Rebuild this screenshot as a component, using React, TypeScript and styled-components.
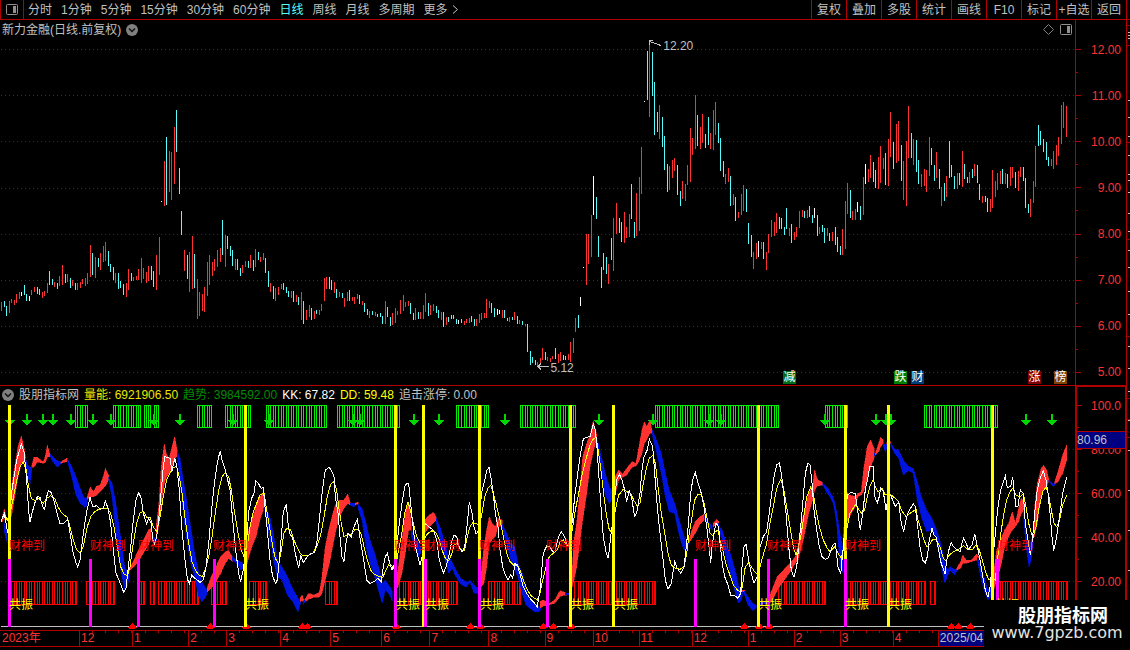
import React from "react";
import styled, { createGlobalStyle } from "styled-components";

const LINE = "#b00000";
const RED = "#ff3232";
const CYAN = "#54fcfc";
const BLUE = "#0014e0";
const SILVER = "#c0c0c0";
const NAVY = "#000080";

const GlobalStyle = createGlobalStyle`
  * { box-sizing: border-box; }
  body {
    margin: 0;
    background: #000;
    color: ${SILVER};
    font: 12px/16px "Liberation Sans", "Noto Sans CJK SC", sans-serif;
  }
`;

/* ---------- data: samples are stored in thirds of a plot unit ---------- */

type Pt = number[];
const rows = (src: string): Pt[] =>
  src.trim().split(/[\s]*,[\s]*|\n/).filter(Boolean).map((r) => r.trim().split(/\s+/).map(Number));
const place = (ox: number, oy: number, src: string): Pt[] =>
  rows(src).map((r) => [ox + r[0] / 3, ...r.slice(1).map((v) => oy + v / 3)]);

type Candle = { x: number; top: number; bottom: number; color: string };
const candles = (ox: number, oy: number, src: string): Candle[] =>
  src.trim().split(/\s*,\s*/).map((r) => {
    const [x, a, b, k] = r.split(" ");
    return {
      x: ox + Math.floor(Number(x) / 3),
      top: oy + Math.round(Number(a) / 3),
      bottom: oy + Math.round(Number(b) / 3),
      color: k === "r" ? RED : k === "c" ? CYAN : "#ffffff",
    };
  });

const CANDLES: Candle[] = [
  ...candles(0, 100, `4 606 633 r,13 603 620 c,19 618 648 c,28 603 639 r,34 597 609 r,43 600 615 r,49 582 609 r,58 576 597 r,64 576 588 w,73 555 585 c,79 582 603 c,88 588 603 w,94 570 585 r,103 561 576 r,112 561 582 c,118 567 585 c,127 576 594 r,133 573 588 r,142 549 579 r,148 513 555 c,157 537 555 c,163 546 561 r,172 549 567 c,178 528 558 r,187 495 555 r,196 522 549 c,202 522 546 r,211 534 564 c,217 540 558 r,226 549 570 c,232 549 570 r,241 546 564 r,247 537 552 r,256 534 558 r,262 519 552 r,271 435 531 r,277 459 525 c,286 471 534 r,295 474 501 c,301 459 510 r,310 438 486 r,316 426 483 r,325 453 498 c,331 492 516 c,340 501 540 c,346 519 549 r,355 519 567 c,361 543 564 c,370 552 585 c,379 549 591 r,385 507 570 r,394 519 543 c,400 531 543 r,409 528 540 r,415 507 540 r,424 474 549 r,430 504 537 r,439 516 549 r,445 498 543 r,454 498 540 c,460 513 561 c,469 465 570 r,478 411 525 r,484 303 306 w,493 183 318 r,499 111 315 c,508 153 276 r,514 156 300 r,523 81 252 r,529 30 156 c,538 204 282 c,544 333 405 c,553 450 513 r,562 465 537 c,568 456 576 r,577 408 567 r,583 462 564 c,592 537 657 r,598 576 648 r,607 582 633 r,613 561 636 r,622 486 588 r,628 465 555 r,637 486 528 r,643 477 513 r,652 450 501 r,661 444 486 r,667 360 465 c,676 405 501 r,682 408 447 c,691 438 468 c,697 450 498 c,706 477 510 r,712 477 510 c,721 504 528 c,727 495 519 r,736 483 501 r,745 483 504 c,751 465 504 r,760 480 513 c,766 447 501 r,775 456 480 c,781 471 486 r,790 459 480 r,796 474 519 c,805 513 561 c,811 549 576 r,820 558 597 c,826 564 603 r,835 561 585 r,844 552 567 r,850 549 570 c,859 561 579 c,865 573 591 c,874 573 594 r,880 573 606 c,889 585 606 r,895 591 615 c,904 576 660 r,910 603 672 c,919 630 660 r,928 615 651 r,934 624 660 c,943 633 657 r,949 630 642 c,958 630 645 r,964 612 633 r,973 534 603 r,979 531 567 r,988 531 567 c`),
  ...candles(320, 260, `34 60 90 c,43 66 99 r,49 87 114 c,58 96 111 r,67 99 114 c,73 114 141 r,82 96 123 r,88 90 123 c,97 111 123 r,103 111 132 r,112 102 117 r,118 105 132 c,127 123 135 r,133 129 156 c,142 147 165 c,148 153 174 r,157 153 165 c,166 156 168 r,172 162 171 c,181 159 171 c,187 168 192 c,196 123 192 r,202 141 171 c,211 171 198 c,217 159 195 r,226 144 189 r,232 153 165 r,241 120 162 r,250 105 153 r,256 126 141 r,265 123 138 r,271 129 162 c,280 159 180 c,286 144 180 r,295 156 177 c,301 156 177 r,310 135 177 r,316 99 156 r,325 129 168 c,331 135 165 r,340 132 153 r,349 138 159 c,355 150 174 c,364 156 180 r,370 156 201 c,379 171 195 r,385 171 186 c,394 165 177 c,400 165 177 c,409 177 192 c,415 180 192 w,424 177 189 c,433 183 195 r,439 177 189 r,448 174 189 r,454 168 186 c,463 177 198 c,469 177 198 r,478 162 189 r,484 159 180 r,493 159 174 r,499 117 174 r,508 123 144 r,514 129 159 c,523 144 171 c,532 147 165 w,538 150 162 w,547 150 174 r,553 150 174 c,562 174 183 c,568 171 186 r,577 171 180 c,583 156 180 r,592 168 192 c,598 180 192 r,607 183 195 c,616 192 198 r,622 192 276 c,631 273 315 c,637 291 309 c,646 300 315 c,652 306 318 r,661 294 312 r,667 264 300 r,676 276 300 c,682 291 303 r,691 294 306 r,697 288 297 r,706 264 297 c,715 282 309 r,721 276 303 r,730 285 300 c,736 288 300 c,745 282 300 r,751 246 306 r,760 234 279 r,766 174 216 r,775 165 204 c,781 111 138 w`),
  ...candles(560, 30, `70 711 714 w,79 612 765 r,85 612 702 r,94 555 681 r,100 438 555 w,109 501 567 c,115 618 681 c,124 711 774 c,130 669 720 c,139 681 732 c,145 702 762 r,154 624 690 c,160 564 723 r,169 519 612 r,178 564 609 c,184 576 636 c,193 546 639 r,199 591 624 r,208 552 621 r,214 462 567 c,223 576 624 c,229 489 618 r,238 441 603 r,244 351 492 r,253 213 216 w,262 63 210 c,268 36 261 r,277 66 198 c,283 156 315 c,292 246 306 c,298 225 327 r,307 261 351 c,313 318 420 c,322 402 486 c,328 408 480 r,337 390 444 r,343 384 423 r,352 405 495 c,361 483 528 c,367 453 507 r,376 462 513 r,382 405 465 r,391 294 456 r,397 324 375 r,406 195 357 r,412 255 348 c,421 291 357 r,427 252 339 r,436 312 354 c,445 261 345 c,451 309 357 r,460 240 360 r,466 216 315 r,475 279 339 c,481 324 423 c,490 393 441 c,496 432 462 r,505 414 456 r,511 438 528 c,520 492 525 r,526 501 573 c,535 546 564 r,544 492 555 r,550 465 543 r,559 477 546 c,565 579 642 c,574 615 681 c,580 666 717 r,589 639 687 r,595 633 681 w,604 636 657 r,610 636 687 c,619 666 720 r,625 612 669 r,634 570 621 r,643 576 618 r,649 549 609 r,658 561 597 c,664 564 597 c,673 591 615 c,679 534 597 c,688 594 618 r,694 582 639 c,703 606 630 r,709 591 621 r,718 543 594 r,727 540 561 r,733 543 564 c,742 540 564 r,748 528 561 c,757 555 579 c,763 534 564 w,772 555 618 c,778 591 612 r,787 585 606 c,793 594 639 c,802 594 618 r,808 609 633 c,817 606 633 r,826 591 645 c,832 621 666 c,841 648 675 c,847 597 675 r,856 513 657 r,862 459 552 r`),
  ...candles(830, 80, `61 330 414 c,67 393 420 r,76 387 420 r,82 366 396 w,91 378 420 c,100 291 405 r,106 252 312 w,115 267 306 r,121 225 294 r,130 246 306 c,136 270 324 c,145 231 327 r,151 198 309 r,160 234 267 r,166 219 315 c,175 177 318 r,181 96 231 r,190 186 267 c,199 132 249 r,205 123 243 r,214 195 303 c,220 243 360 r,229 183 378 r,235 78 234 r,244 159 234 c,250 177 255 r,259 180 276 c,265 240 312 c,274 282 321 r,283 267 318 r,289 270 336 r,298 171 288 r,304 204 255 c,313 255 303 c,319 216 294 r,328 267 327 c,334 321 378 r,343 309 363 c,349 288 351 r,358 183 294 c,364 255 291 c,373 288 327 c,382 279 327 r,388 279 315 c,397 213 321 r,403 252 297 c,412 291 309 c,418 276 309 r,427 267 294 c,433 252 288 r,442 255 309 c,448 312 360 c,457 348 369 r,466 348 366 c,472 354 396 c,481 357 396 r,487 270 384 r,496 303 351 r,502 279 330 r,511 273 312 r,517 267 312 c,526 279 312 r,532 282 324 c,541 261 318 r,547 261 294 r,556 276 324 c,565 273 333 r,571 261 291 r,580 261 303 c,586 294 384 c,595 372 399 c,601 357 411 r,610 303 369 r,616 198 321 r,625 135 198 c,631 153 195 c,640 177 216 c,649 186 240 c,655 231 258 c,664 237 258 r,670 213 267 r,679 195 255 r,685 171 228 r,694 75 192 r,700 66 144 r,709 78 171 r`),
];

const KK: Pt[] = [
  ...place(0, 380, `3 425,13 400,18 430,23 460,28 440,30 390,36 330,50 240,64 193,72 215,80 300,86 395,90 425,96 400,104 370,112 350,120 352,128 380,134 388,140 350,145 332,152 335,160 355,170 395,180 432,192 430,203 418,210 460,220 520,228 548,233 560,240 540,250 460,260 395,270 352,278 380,290 377,300 388,310 385,316 362,324 385,332 430,340 510,348 580,357 600,371 637,378 625,384 570,392 500,400 420,408 360,416 338,424 355,430 400,440 432,446 415,454 430,458 480,464 492,470 470,478 400,484 330,490 260,494 230,510 235,516 272,524 235,530 255,538 330,545 440,555 540,562 595,568 613,575 585,585 595,600 607,610 600,618 560,626 490,634 400,642 320,650 260,656 230,661 212,666 240,676 270,690 330,698 420,708 520,718 590,722 603,730 570,740 480,746 395,755 355,762 340,767 302,775 310,783 325,790 322,794 370,802 450`),
  ...place(270, 380, `0 540,8 590,17 610,22 600,28 540,34 470,40 395,49 373,54 430,60 462,68 475,76 520,86 565,92 525,100 548,112 530,124 520,134 518,140 490,146 440,153 370,160 310,166 270,178 262,186 275,192 290,196 350,204 400,210 470,216 530,222 545,228 490,234 460,244 470,252 440,262 418,268 460,276 510,284 560,290 600,300 610,312 605,324 595,334 605,340 560,346 530,352 520,358 545,366 570,374 550,380 500,388 430,396 370,404 320,410 310,416 310,420 350,428 430,436 500,444 530,450 555,456 530,462 460,466 430,476 440,490 450,500 480,508 540,514 560,520 580,528 560,536 530,544 490,552 465,560 470,566 500,576 515,584 500,592 430,598 365,606 400,612 440,618 462,624 455,630 420,634 340,642 310,650 272,657 262,664 300,670 340,676 400,684 440,690 510,698 560,706 585,714 600,722 585,728 595,735 550,744 562,752 590,760 620,770 640,780 655,790 665,802 680`),
  ...place(540, 380, `0 630,6 560,10 520,20 498,30 500,38 515,46 510,56 470,64 455,74 470,82 495,90 500,96 430,104 350,112 290,120 230,130 177,140 172,150 170,160 132,166 150,170 190,176 280,182 370,190 470,198 515,205 535,211 480,216 440,222 370,230 300,238 282,246 300,254 330,260 365,268 330,276 360,284 412,292 390,300 340,306 270,312 230,322 210,328 177,338 200,344 280,352 380,360 460,368 530,376 600,384 628,394 610,404 545,412 565,422 580,432 560,440 490,446 420,452 340,458 300,466 278,474 310,484 340,492 380,500 440,508 510,512 548,516 500,522 460,528 430,536 440,540 490,548 560,554 590,564 615,572 645,582 645,594 655,602 640,606 560,612 500,618 493,626 540,634 580,642 610,652 590,660 500,670 470,680 455,688 400,694 350,702 290,710 255,718 248,724 280,730 330,738 400,746 500,754 570,762 592,770 560,776 500,784 420,790 350,796 280,804 248,810 255,816 310,822 390,830 450,838 500,846 530,856 538,864 535`),
  ...place(830, 380, `0 520,8 495,16 490,24 560,32 582,38 520,46 430,52 345,62 338,76 340,84 400,91 450,98 400,106 330,114 290,120 258,130 260,134 350,142 368,148 350,152 325,160 335,168 390,176 340,184 350,196 380,206 365,214 430,221 455,230 410,238 390,250 372,256 380,262 430,270 500,278 540,286 548,292 530,298 480,306 445,312 465,318 470,324 500,332 545,345 582,352 530,358 505,364 488,370 500,380 508,390 515,396 490,401 475,408 490,416 508,426 495,434 462,440 490,450 540,458 590,466 630,474 652,480 620,486 560,492 500,498 440,504 380,512 330,520 305,526 288,532 322,542 320,548 290,552 330,558 380,564 378,571 330,580 340,586 430,594 480,601 525,608 470,616 380,622 330,632 290,640 272,648 300,654 340,660 400,666 470,671 512,680 470,690 400,698 340,710 292`),
];

const DD: Pt[] = [
  ...place(0, 380, `3 425,13 402,22 420,30 400,40 355,50 300,60 260,70 246,78 268,84 310,94 355,104 362,116 355,130 370,140 355,152 347,164 355,174 380,184 398,202 412,210 440,220 480,230 510,240 518,250 500,262 440,272 410,284 395,296 388,310 385,322 385,332 400,342 440,352 500,362 560,372 582,382 588,390 560,400 490,410 430,420 398,430 394,440 412,450 412,460 440,470 455,480 410,490 350,500 300,510 280,520 262,530 260,538 290,546 340,556 420,566 490,576 545,586 570,596 585,606 590,616 570,626 530,636 470,646 400,656 330,666 290,676 278,686 290,694 330,704 400,714 460,724 510,734 535,742 500,750 440,760 395,770 370,780 345,792 340,802 400`),
  ...place(270, 380, `0 450,8 500,16 535,26 553,34 510,42 460,50 445,62 450,70 475,80 500,90 520,100 528,116 525,130 518,142 495,152 465,162 410,172 350,182 312,192 305,200 330,206 380,214 430,222 470,232 465,244 462,256 448,266 448,274 465,282 500,292 540,302 570,312 583,324 588,338 592,346 575,356 555,366 558,376 570,384 520,394 470,404 400,414 365,422 395,430 430,440 470,450 490,458 490,466 470,474 460,486 452,498 458,508 480,516 510,526 535,536 543,546 520,552 495,562 490,574 510,584 510,592 470,600 440,608 428,618 430,628 435,636 400,644 350,654 325,662 316,670 340,678 370,690 420,700 470,710 520,720 545,732 557,742 555,752 575,762 605,772 630,784 648,802 660`),
  ...place(540, 380, `0 640,8 600,18 560,28 530,40 520,52 510,60 485,70 480,80 495,90 490,98 440,106 390,116 340,126 285,140 230,150 195,160 177,168 172,176 220,184 280,192 350,200 410,208 450,214 455,220 420,228 380,236 345,250 328,260 335,272 340,282 362,292 378,300 368,308 320,318 270,328 235,338 226,346 250,354 320,364 400,374 460,384 520,394 555,406 565,420 568,432 560,440 520,448 460,456 410,464 360,474 342,484 342,492 370,500 410,510 460,518 468,526 455,534 450,540 480,548 510,556 545,566 575,580 615,594 632,604 635,610 600,616 560,626 548,634 560,644 575,652 583,660 560,668 530,680 490,690 430,700 380,710 325,722 298,730 320,740 380,750 440,760 500,768 525,776 500,784 460,790 420,800 350,812 322,820 340,828 390,838 440,850 480,862 505`),
  ...place(830, 380, `0 515,14 500,24 520,34 535,42 500,50 450,60 400,76 375,84 385,94 400,104 390,112 350,120 318,130 298,136 320,144 335,156 325,166 345,176 340,190 350,204 362,214 390,228 410,240 400,258 388,264 420,272 445,280 475,290 500,298 495,308 478,320 480,330 500,340 535,348 543,358 525,370 515,384 510,400 497,414 508,426 510,438 495,448 510,458 545,468 580,476 598,486 595,496 600,502 540,508 500,514 450,522 400,530 360,540 335,548 325,558 345,570 350,580 342,588 380,596 430,604 460,610 470,618 440,628 380,638 335,648 322,656 345,664 390,672 430,680 440,688 425,698 375,710 345`),
];

/* Trend ribbon: each run is x, upper edge, lower edge */
type Band = { color: string; pts: Pt[] };
const bands = (ox: number, src: string): Band[] =>
  src.trim().split(/\s*;\s*/).map((run) => ({
    color: run[0] === "r" ? RED : BLUE,
    pts: place(ox, 380, run.slice(2)),
  }));

const BANDS: Band[] = [
  ...bands(0, `r 6 412 425,13 388 412,17 405 430;b 12 430 450,22 450 490;r 30 370 420,36 310 400,44 260 350,54 200 290,64 168 250,72 205 240,78 240 255;b 76 235 250,84 255 290,90 262 312,95 262 275;r 95 258 262,102 232 262,112 232 246,122 240 248,130 245 250,136 230 248,142 195 230,150 225 230;b 150 222 230,160 232 246,172 242 262,184 246 250;r 182 246 250,202 234 244;b 203 238 246,215 260 290,228 290 345,240 325 370,254 355 382,262 352 375;r 262 350 358,271 320 350,280 335 350,290 318 345,300 316 335,310 290 325,316 265 318,326 285 300;b 326 292 300,336 310 350,346 360 440,356 430 530,366 500 590,374 560 630,382 575 620,388 570 590;r 388 565 572,400 545 562,415 510 545,430 480 520,445 450 495,454 445 475;b 454 455 480,464 475 492,470 470 478;r 468 440 475,476 380 440,484 260 370,493 192 310,500 225 290,508 235 280,516 200 260,524 170 240,532 215 225;b 532 215 225,540 235 300,550 300 400,560 360 480,572 440 550,584 520 590,596 575 650,606 605 665,614 620 655,622 630 640;r 622 622 635,634 590 625,648 560 605,662 530 580,676 515 550,686 512 535,697 530 545;b 697 530 540,710 540 550,722 545 570,730 550 565;r 735 535 580,746 450 530,756 420 500,768 380 470,780 350 420,790 340 390,794 345 360;b 794 370 390,804 400 450,812 420 500`),
  ...bands(270, `b 0 415 460,10 460 540,22 540 590,36 560 600,52 590 645,68 625 665,84 655 695,92 660 670;r 90 655 665,96 645 662,102 662 668,116 640 658,130 645 652,148 638 652,156 590 640,166 500 600,176 450 560,186 410 510,196 375 460,208 360 410,222 360 385,233 342 370,240 365 375;b 100 662 674,106 660 664;b 240 370 376,252 370 380,258 368 374;r 255 370 374,264 366 372;b 264 372 385,276 385 420,288 430 500,300 480 550,314 520 590,328 570 640,337 610 670,346 600 630,356 615 640,366 632 662;r 372 620 640,384 570 620,396 480 580,406 400 520,416 365 450,424 430 450;b 424 450 470,436 470 500,446 490 530,452 500 520;r 464 420 460,478 405 440,490 397 430,498 410 420;b 498 415 425,510 440 480,522 480 530,536 530 580,546 545 565,558 570 590,572 595 612,588 605 622,596 605 612,600 600 606,612 615 640,624 625 640;r 634 580 620,642 500 610,650 450 560,658 410 490,666 430 480,676 440 470,684 415 440,696 420 438;b 696 432 442,710 460 490,722 490 540,734 500 570,744 550 590,756 580 640,768 630 675,780 655 685,794 670 695,806 680 695,812 680 690;r 810 665 685,820 660 678,836 668 675`),
  ...bands(540, `r 26 672 675,44 660 670,60 632 650,72 636 645,80 640 645;b 76 640 644,88 640 644;r 96 580 620,102 480 600,110 430 560,118 350 500,128 230 420,140 190 340,150 165 260,160 122 215,170 165 175;b 170 170 190,182 220 270,196 280 345,208 320 372,215 330 360;r 226 290 340,236 270 300,248 282 292,260 265 285,276 245 262,288 250 258,296 205 245,306 150 220,313 125 190,320 140 180,330 122 160,336 150 160;b 336 150 160,350 180 220,364 220 280,376 280 350,388 330 395,404 370 400,416 415 460,430 460 505,438 490 515,446 480 490;r 446 480 490,456 450 475,466 425 460,478 412 435,492 402 420;b 494 408 415,506 428 440,516 435 450;r 520 430 440,530 418 432,536 425 430;b 534 430 440,546 450 480,560 490 540,574 530 590,588 580 650,596 620 670,604 640 660,608 630 640;r 606 630 634,614 630 636;b 612 632 640,624 650 675,638 670 692,648 675 685;b 660 668 674,684 664 670;r 686 655 675,700 620 655,712 590 630,726 575 610,740 560 590,754 545 570,766 530 550,774 500 540,782 440 510,792 400 470,806 340 400,818 315 360,824 270 330,832 298 318,848 308 315;b 848 310 315,862 322 340,870 335 350`),
  ...bands(830, `b 0 340 350,10 350 370,20 395 430,30 460 560,40 510 580;r 40 470 500,50 335 430,58 345 410,76 350 380,84 340 350,94 335 345,102 260 330,112 200 300,122 180 260,132 205 235;b 132 220 228,138 222 226;r 136 220 225,146 190 215,152 172 200,160 180 190;b 160 190 200,166 195 215,174 190 200;r 170 185 192,182 186 190;b 182 188 196,194 208 220,206 210 235,220 240 285,236 260 272,250 265 280,262 305 360,274 350 410,290 390 455,306 415 450,320 450 480,332 490 550,344 550 610,352 570 590,360 560 570,374 568 585,382 566 570;r 380 565 570,392 545 565,398 525 550,408 540 550,424 540 545,440 522 540,446 530 532;b 442 530 540,452 560 590,462 590 630,474 630 660,482 620 650;r 488 600 640,500 510 600,512 480 560,524 450 500,536 430 470,547 395 450,556 430 440,566 385 425,574 355 400,584 370 390;b 580 390 400,588 440 500,597 500 560,604 480 540,610 470 480;r 612 400 470,622 310 430,632 270 350,640 255 330,650 270 320,656 298 302;b 656 300 304,670 312 320,676 306 312;r 674 306 312,684 275 305,698 225 280,710 195 240`),
];

const GREEN_BLOCKS = rows("75 88,113 141,144 151,154 159,197 212,225 251,266 327,337 400,456 489,520 576,655 779,825 848,924 932,934 998");
const RED_BLOCKS = rows("11 77,86 115,138 145,150 155,158 199,211 227,249 267,325 338,399 424,425 458,488 521,574 656,778 826,847 926,930 936,998 1068");
const YELLOW_BARS = [8, 244, 394, 422, 478, 569, 612, 757, 844, 887, 991];
const MAGENTA_BARS = [8, 89, 137, 213, 394, 424, 478, 546, 694, 767, 844, 996];
const ARROWS = [10, 27, 43, 53, 71, 93, 111, 154, 180, 233, 269, 353, 360, 414, 439, 505, 599, 653, 709, 721, 825, 876, 886, 891, 1026, 1052];
const TRIANGLES = [132, 210, 246, 302, 307, 396, 470, 480, 543, 553, 571, 744, 759, 769, 951, 958, 970];
const WEALTH_X = [9, 90, 138, 213, 394, 424, 479, 546, 695, 767, 845, 997];
const RESONANCE_X = [9, 245, 396, 425, 480, 570, 614, 758, 845, 888, 995];
const BADGES: [number, string, string][] = [
  [783, "减", "#006c1c"],
  [894, "跌", "#008000"],
  [911, "财", "#003c78"],
  [1028, "涨", "#800000"],
  [1054, "榜", "#804000"],
];
const MONTHS: [string, number][] = [
  ["2023年", 79], ["12", 53], ["1", 56], ["2", 38], ["3", 54], ["4", 50], ["5", 51], ["6", 48], ["7", 59],
  ["8", 56], ["9", 48], ["10", 46], ["11", 53], ["12", 56], ["1", 46], ["2", 46], ["3", 53], ["4", 45], ["2025/04.", 138],
];

/* ---------- page frame ---------- */

const Screen = styled.div`
  display: flex;
  flex-direction: column;
  min-height: 100vh;
  position: relative;
  overflow: hidden;
`;

const Toolbar = styled.header`
  display: flex;
  height: 20px;
  padding-right: 3px;
  border-bottom: 1px solid ${LINE};
`;

const PlainButton = styled.button`
  margin: 0;
  padding: 0;
  border: 0;
  background: none;
  color: inherit;
  font: inherit;
  white-space: nowrap;
`;

const PaneButton = styled(PlainButton)`
  display: flex;
  align-items: center;
  justify-content: center;
  width: 24px;
  border: solid ${LINE};
  border-width: 0 1px;
`;

const Periods = styled.nav`
  display: flex;
  align-items: center;
  gap: 9px;
  padding-left: 4px;
  flex: 1;
`;

const Period = styled(PlainButton)<{ $active?: boolean }>`
  display: flex;
  align-items: center;
  gap: 4px;
  color: ${(p) => (p.$active ? CYAN : SILVER)};
`;

const Tools = styled.div`
  display: flex;
  border-right: 1px solid ${LINE};
`;

const Tool = styled(PlainButton)`
  display: flex;
  align-items: center;
  justify-content: center;
  width: 35px;
  border-left: 1px solid ${LINE};
`;

const Workspace = styled.main`
  flex: 1;
  display: grid;
  grid-template-columns: minmax(0, 1fr) 52px 3px;
  grid-template-rows: minmax(0, 366fr) minmax(0, 244fr) 17px 3px;
`;

const Panel = styled.section<{ $ruled?: boolean }>`
  display: flex;
  flex-direction: column;
  min-width: 0;
  border-bottom: ${(p) => (p.$ruled ? `1px solid ${LINE}` : "0")};
`;

const PanelHead = styled.div<{ $tall?: boolean }>`
  display: flex;
  align-items: center;
  gap: 5px;
  height: ${(p) => (p.$tall ? 19 : 17)}px;
  padding: 0 3px 0 2px;
  white-space: nowrap;
`;

const IconButton = styled(PlainButton)`
  display: flex;
`;

const HeadTools = styled.div`
  display: flex;
  align-items: center;
  gap: 6px;
  margin-left: auto;
`;

const Reading = styled.span<{ $color?: string }>`
  color: ${(p) => p.$color ?? SILVER};
`;

const Plot = styled.div`
  position: relative;
  flex: 1;
  min-height: 0;
`;

const Drawing = styled.svg`
  position: absolute;
  inset: 0;
  width: 100%;
  height: 100%;
`;

const Mark = styled.span<{ $x: number; $y: number; $color: string }>`
  position: absolute;
  left: ${(p) => p.$x}%;
  top: ${(p) => p.$y}%;
  color: ${(p) => p.$color};
  line-height: 14px;
  white-space: nowrap;
`;

const Badge = styled(Mark)<{ $bg: string }>`
  width: 13px;
  background: ${(p) => p.$bg};
  line-height: 13px;
  text-align: center;
`;

const Scale = styled.div<{ $framed?: boolean }>`
  position: relative;
  display: flex;
  flex-direction: column;
  justify-content: space-between;
  padding: ${(p) => (p.$framed ? "18px 4px 26px 0" : "29px 5px 12px 0")};
  border: solid ${LINE};
  border-width: ${(p) => (p.$framed ? "1px 2px 0" : "0 1px 1px")};
`;

const Tick = styled.div<{ $minor?: boolean }>`
  display: flex;
  align-items: center;
  justify-content: space-between;
  height: 1px;
  color: ${RED};
  &::before {
    content: "";
    width: ${(p) => (p.$minor ? 2 : 5)}px;
    height: 1px;
    background: ${LINE};
  }
`;

const CurrentValue = styled.div`
  position: absolute;
  top: 44px;
  left: 0;
  right: 0;
  height: 18px;
  background: ${NAVY};
  border: solid ${LINE};
  border-width: 1px 0;
  line-height: 16px;
`;

const Edge = styled.div`
  grid-column: 3;
  grid-row: 1 / 5;
  contain: size;
  overflow: hidden;
`;

const Months = styled.div`
  grid-column: 1 / 3;
  display: grid;
  grid-template-columns: ${MONTHS.map((m) => `minmax(0, ${m[1]}fr)`).join(" ")} 51px;
  border: solid ${LINE};
  border-width: 1px 0;
  color: ${RED};
`;

const Month = styled.div<{ $first?: boolean; $current?: boolean }>`
  padding-left: ${(p) => (p.$first ? 2 : 1)}px;
  border-left: ${(p) => (p.$first ? "0" : `1px solid ${LINE}`)};
  background: ${(p) =>
    p.$current
      ? NAVY
      : p.$first
        ? "none"
        : `repeating-linear-gradient(90deg, transparent 0 12px, ${LINE} 12px 13px) 0 0 / 100% 2px no-repeat`};
  color: ${(p) => (p.$current ? SILVER : RED)};
  line-height: 15px;
  white-space: nowrap;
`;

const NextRow = styled.div`
  grid-column: 1 / 3;
  overflow: hidden;
`;

const Watermark = styled.aside`
  position: absolute;
  right: 0;
  bottom: 0;
  width: 146px;
  height: 50px;
  padding-top: 3px;
  background: #000;
  color: #fff;
  text-align: center;
`;

const SiteName = styled.div`
  padding-left: 12px;
  font: bold 18px/22px "Noto Sans CJK SC", sans-serif;
`;

const SiteAddress = styled.div`
  color: #e4e4e4;
  font: 16px/16px "DejaVu Sans", sans-serif;
`;

/* ---------- icons ---------- */

const PaneIcon = () => (
  <svg width="12" height="11" viewBox="0 0 12 11" aria-hidden>
    <rect x="0.5" y="0.5" width="11" height="10" rx="1" fill="none" stroke="#909090" />
    <rect x="7" y="2" width="3" height="7" fill="#909090" />
  </svg>
);

const DropIcon = () => (
  <svg width="12" height="12" viewBox="0 0 12 12" aria-hidden>
    <circle cx="6" cy="6" r="6" fill="#808080" />
    <path d="M3 4.5 L6 7.5 L9 4.5" fill="none" stroke="#101010" strokeWidth="1.5" />
  </svg>
);

const DiamondIcon = () => (
  <svg width="11" height="11" viewBox="0 0 11 11" aria-hidden>
    <path d="M5.5 0.5 L10.5 5.5 L5.5 10.5 L0.5 5.5 Z" fill="none" stroke="#808080" />
  </svg>
);

/* ---------- charts ---------- */

const W = 1075;
const polyline = (pts: Pt[]) => pts.map((p) => `${p[0].toFixed(1)},${p[1].toFixed(1)}`).join(" ");
const ribbon = (pts: Pt[]) => {
  const upper = pts.map((p) => `${p[0].toFixed(1)},${p[1].toFixed(1)}`);
  const lower = [...pts].reverse().map((p) => `${p[0].toFixed(1)},${p[2].toFixed(1)}`);
  return [...upper, ...lower].join(" ");
};

const DottedRules = ({ at }: { at: number[] }) => (
  <g stroke="#a00000" strokeDasharray="1 3">
    {at.map((y) => (
      <line key={y} x1="1" x2={W} y1={y + 0.5} y2={y + 0.5} />
    ))}
  </g>
);

const PriceDrawing = () => (
  <Drawing viewBox="0 39 1075 346" preserveAspectRatio="none" shapeRendering="crispEdges" role="img" aria-label="新力金融日线">
    <DottedRules at={[49, 95, 141, 188, 234, 280, 326, 372]} />
    {CANDLES.map((c, i) => (
      <rect key={i} x={c.x} y={c.top} width="1" height={c.bottom - c.top} fill={c.color} />
    ))}
    <g stroke={SILVER} fill="none">
      <path d="M649.5 41.5 L661 45.5 M649.5 45 V40.5 H653" />
      <path d="M537.5 366.5 H549 M541 363.5 L538 366.5 L541 369.5" />
    </g>
  </Drawing>
);

const Block = ({ from, to, y, height, color }: { from: number; to: number; y: number; height: number; color: string }) => (
  <g fill="none" stroke={color}>
    <rect x={from + 0.5} y={y + 0.5} width={to - from - 1} height={height - 1} />
    {CANDLES.filter((c) => c.x > from + 1 && c.x < to - 1).map((c) => (
      <line key={c.x} x1={c.x + 0.5} x2={c.x + 0.5} y1={y} y2={y + height} />
    ))}
  </g>
);

const IndicatorDrawing = () => (
  <Drawing viewBox="0 403 1075 227" preserveAspectRatio="none" shapeRendering="crispEdges" role="img" aria-label="量能趋势">
    <DottedRules at={[449, 493, 537, 581]} />
    {GREEN_BLOCKS.map(([a, b]) => (
      <Block key={a} from={a} to={b} y={405} height={23} color="#00f000" />
    ))}
    {RED_BLOCKS.map(([a, b]) => (
      <Block key={a} from={a} to={b} y={581} height={24} color="#ff0000" />
    ))}
    {ARROWS.map((x) => (
      <path key={x} d={`M${x - 1} 414 h2 v6 h4 l-5 6 l-5 -6 h4 z`} fill="#00d800" />
    ))}
    {BANDS.map((b, i) => (
      <polygon key={i} points={ribbon(b.pts)} fill={b.color} stroke={b.color} strokeWidth="0.5" />
    ))}
    <polyline points={polyline(DD)} fill="none" stroke="#ffff00" />
    <polyline points={polyline(KK)} fill="none" stroke="#ffffff" />
    <rect x="1" y="626" width="1074" height="1" fill={SILVER} />
    {TRIANGLES.map((x) => (
      <path key={x} d={`M${x} 623 l5 5 h-2 v1 h-6 v-1 h-2 z`} fill="#ff0000" />
    ))}
    {YELLOW_BARS.map((x) => (
      <rect key={x} x={x} y="405" width="3" height="222" fill="#ffff00" />
    ))}
    {MAGENTA_BARS.map((x) => (
      <rect key={x} x={x} y="559" width="3" height="68" fill="#ff00ff" />
    ))}
  </Drawing>
);

const EdgeDrawing = () => (
  <svg width="3" height="600" viewBox="0 0 3 600" shapeRendering="crispEdges" aria-hidden>
    <path d="M1 80h2M1 97h2M1 116h2M1 135h2M1 154h2M1 160h2M1 172h2M1 193h2M1 211h2M1 230h2M1 247h2M1 271h2M1 294h2M1 326h2M1 348h2M1 371h2M1 400h2M1 430h2M1 470h2M1 510h2M1 550h2M1 12h2M1 15h2M1 18h2" stroke={SILVER} />
    <path d="M0 5h3M0 25h3M0 122h3M0 219h3M0 316h3M0 378h3M0 399h3M0 417h3" stroke={LINE} />
  </svg>
);

const PERIODS = ["分时", "1分钟", "5分钟", "15分钟", "30分钟", "60分钟", "日线", "周线", "月线", "多周期"];
const TOOLS = ["复权", "叠加", "多股", "统计", "画线", "F10", "标记", "+自选", "返回"];
const PRICES = ["12.00", "11.00", "10.00", "9.00", "8.00", "7.00", "6.00", "5.00"];
const LEVELS = ["100.0", "80.00", "60.00", "40.00", "20.00"];

export default function App() {
  return (
    <>
      <GlobalStyle />
      <Screen>
        <Toolbar>
          <PaneButton aria-label="侧栏"><PaneIcon /></PaneButton>
          <Periods>
            {PERIODS.map((p) => (
              <Period key={p} $active={p === "日线"}>{p}</Period>
            ))}
            <Period>
              更多
              <svg width="7" height="9" viewBox="0 0 7 9" aria-hidden>
                <path d="M1 0.5 L5.5 4.5 L1 8.5" fill="none" stroke={SILVER} />
              </svg>
            </Period>
          </Periods>
          <Tools>
            {TOOLS.map((t) => (
              <Tool key={t}>{t}</Tool>
            ))}
          </Tools>
        </Toolbar>

        <Workspace>
          <Panel $ruled>
            <PanelHead $tall>
              <span>新力金融(日线.前复权)</span>
              <IconButton aria-label="展开"><DropIcon /></IconButton>
              <HeadTools>
                <DiamondIcon />
                <PaneIcon />
              </HeadTools>
            </PanelHead>
            <Plot>
              <PriceDrawing />
              <Mark $x={61.7} $y={0} $color={SILVER}>12.20</Mark>
              <Mark $x={51.2} $y={93} $color={SILVER}>5.12</Mark>
              {BADGES.map(([x, text, bg]) => (
                <Badge key={text} $x={(x / W) * 100} $y={96} $color="#fff" $bg={bg}>{text}</Badge>
              ))}
            </Plot>
          </Panel>
          <Scale>
            {PRICES.map((p, i) => (
              <React.Fragment key={p}>
                {i > 0 && <Tick $minor />}
                <Tick>{p}</Tick>
              </React.Fragment>
            ))}
          </Scale>
          <Edge><EdgeDrawing /></Edge>

          <Panel>
            <PanelHead>
              <IconButton aria-label="展开指标"><DropIcon /></IconButton>
              <Reading>股朋指标网</Reading>
              <Reading $color="#e8e800">量能: 6921906.50</Reading>
              <Reading $color="#008c00">趋势: 3984592.00</Reading>
              <Reading $color="#fff">KK: 67.82</Reading>
              <Reading $color="#ff0">DD: 59.48</Reading>
              <Reading>追击涨停: 0.00</Reading>
            </PanelHead>
            <Plot>
              <IndicatorDrawing />
              {WEALTH_X.map((x) => (
                <Mark key={x} $x={(x / W) * 100} $y={60} $color="#ff0000">财神到</Mark>
              ))}
              {RESONANCE_X.map((x) => (
                <Mark key={x} $x={(x / W) * 100} $y={86} $color="#ffff00">共振</Mark>
              ))}
            </Plot>
          </Panel>
          <Scale $framed>
            {LEVELS.map((l) => (
              <React.Fragment key={l}>
                <Tick>{l}</Tick>
                <Tick $minor />
              </React.Fragment>
            ))}
            <CurrentValue>80.96</CurrentValue>
          </Scale>

          <Months>
            {MONTHS.map(([m], i) => (
              <Month key={i} $first={i === 0} $current={i === MONTHS.length - 1}>{m}</Month>
            ))}
          </Months>
          <NextRow>
            <svg width="900" height="3" viewBox="0 0 900 3" shapeRendering="crispEdges" aria-hidden>
              <path d="M8 2.5h3M13 2.5h2M16 1.5h2M20 2.5h6M50 2.5h2M828 2.5h2M843 2.5h3" stroke={SILVER} />
              <path d="M845 1.5h5M856 1.5h10M852 2.5h2" stroke={CYAN} />
              <path d="M0.5 0v3M43.5 0v2M73.5 0v2M115.5 0v2M144.5 0v2M189.5 0v2M870.5 0v2" stroke={LINE} />
            </svg>
          </NextRow>
        </Workspace>

        <Watermark>
          <SiteName>股朋指标网</SiteName>
          <SiteAddress>www.7gpzb.com</SiteAddress>
        </Watermark>
      </Screen>
    </>
  );
}
